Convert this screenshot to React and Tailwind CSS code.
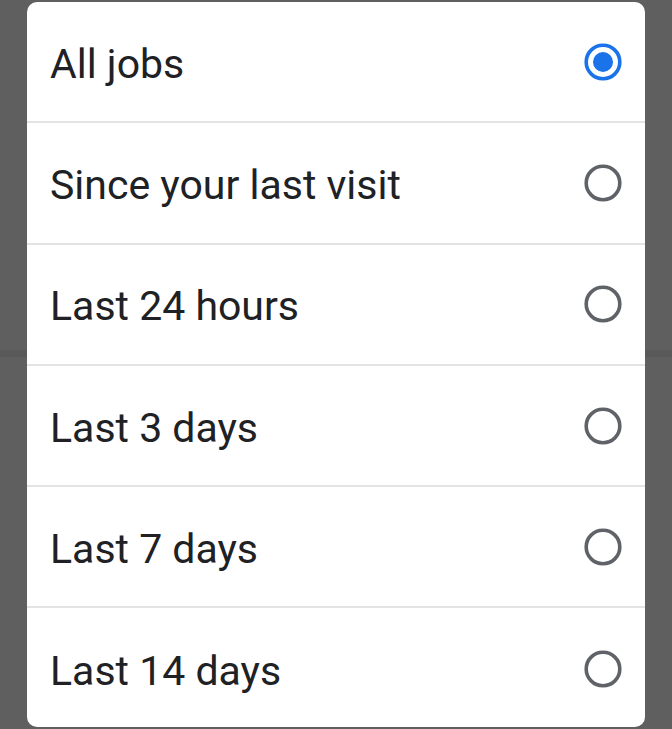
import { useState } from 'react';

const options = [
  'All jobs',
  'Since your last visit',
  'Last 24 hours',
  'Last 3 days',
  'Last 7 days',
  'Last 14 days',
];

const Radio = ({ checked }) => (
  <svg width="40" height="40" viewBox="0 0 40 40">
    <circle
      cx="20"
      cy="20"
      r="16.8"
      fill="none"
      stroke={checked ? '#1a73e8' : '#5f6368'}
      strokeWidth="3.6"
    />
    {checked && <circle cx="20" cy="20" r="10" fill="#1a73e8" />}
  </svg>
);

export default function App() {
  const [selected, setSelected] = useState(0);

  return (
    <div className="relative w-[672px] h-[729px] bg-[#5f5f5f] overflow-hidden font-['Roboto',sans-serif]">
      {/* page line behind the scrim */}
      <div className="absolute left-0 right-0 top-[350px] h-[7px] bg-[#595959]" />

      <div className="relative ml-[27px] mt-[2px] w-[618px] h-[725px] bg-white rounded-[10px] overflow-hidden flex flex-col">
        {options.map((label, i) => (
          <button
            key={label}
            onClick={() => setSelected(i)}
            className={`flex shrink-0 items-center justify-between h-[121.3px] pl-[23px] pr-[22px] text-left ${
              i < options.length - 1 ? 'border-b-2 border-[#e3e3e3]' : ''
            }`}
          >
            <span className="text-[41px] leading-none text-[#202124] pt-[5px]">{label}</span>
            <Radio checked={selected === i} />
          </button>
        ))}
      </div>
    </div>
  );
}
